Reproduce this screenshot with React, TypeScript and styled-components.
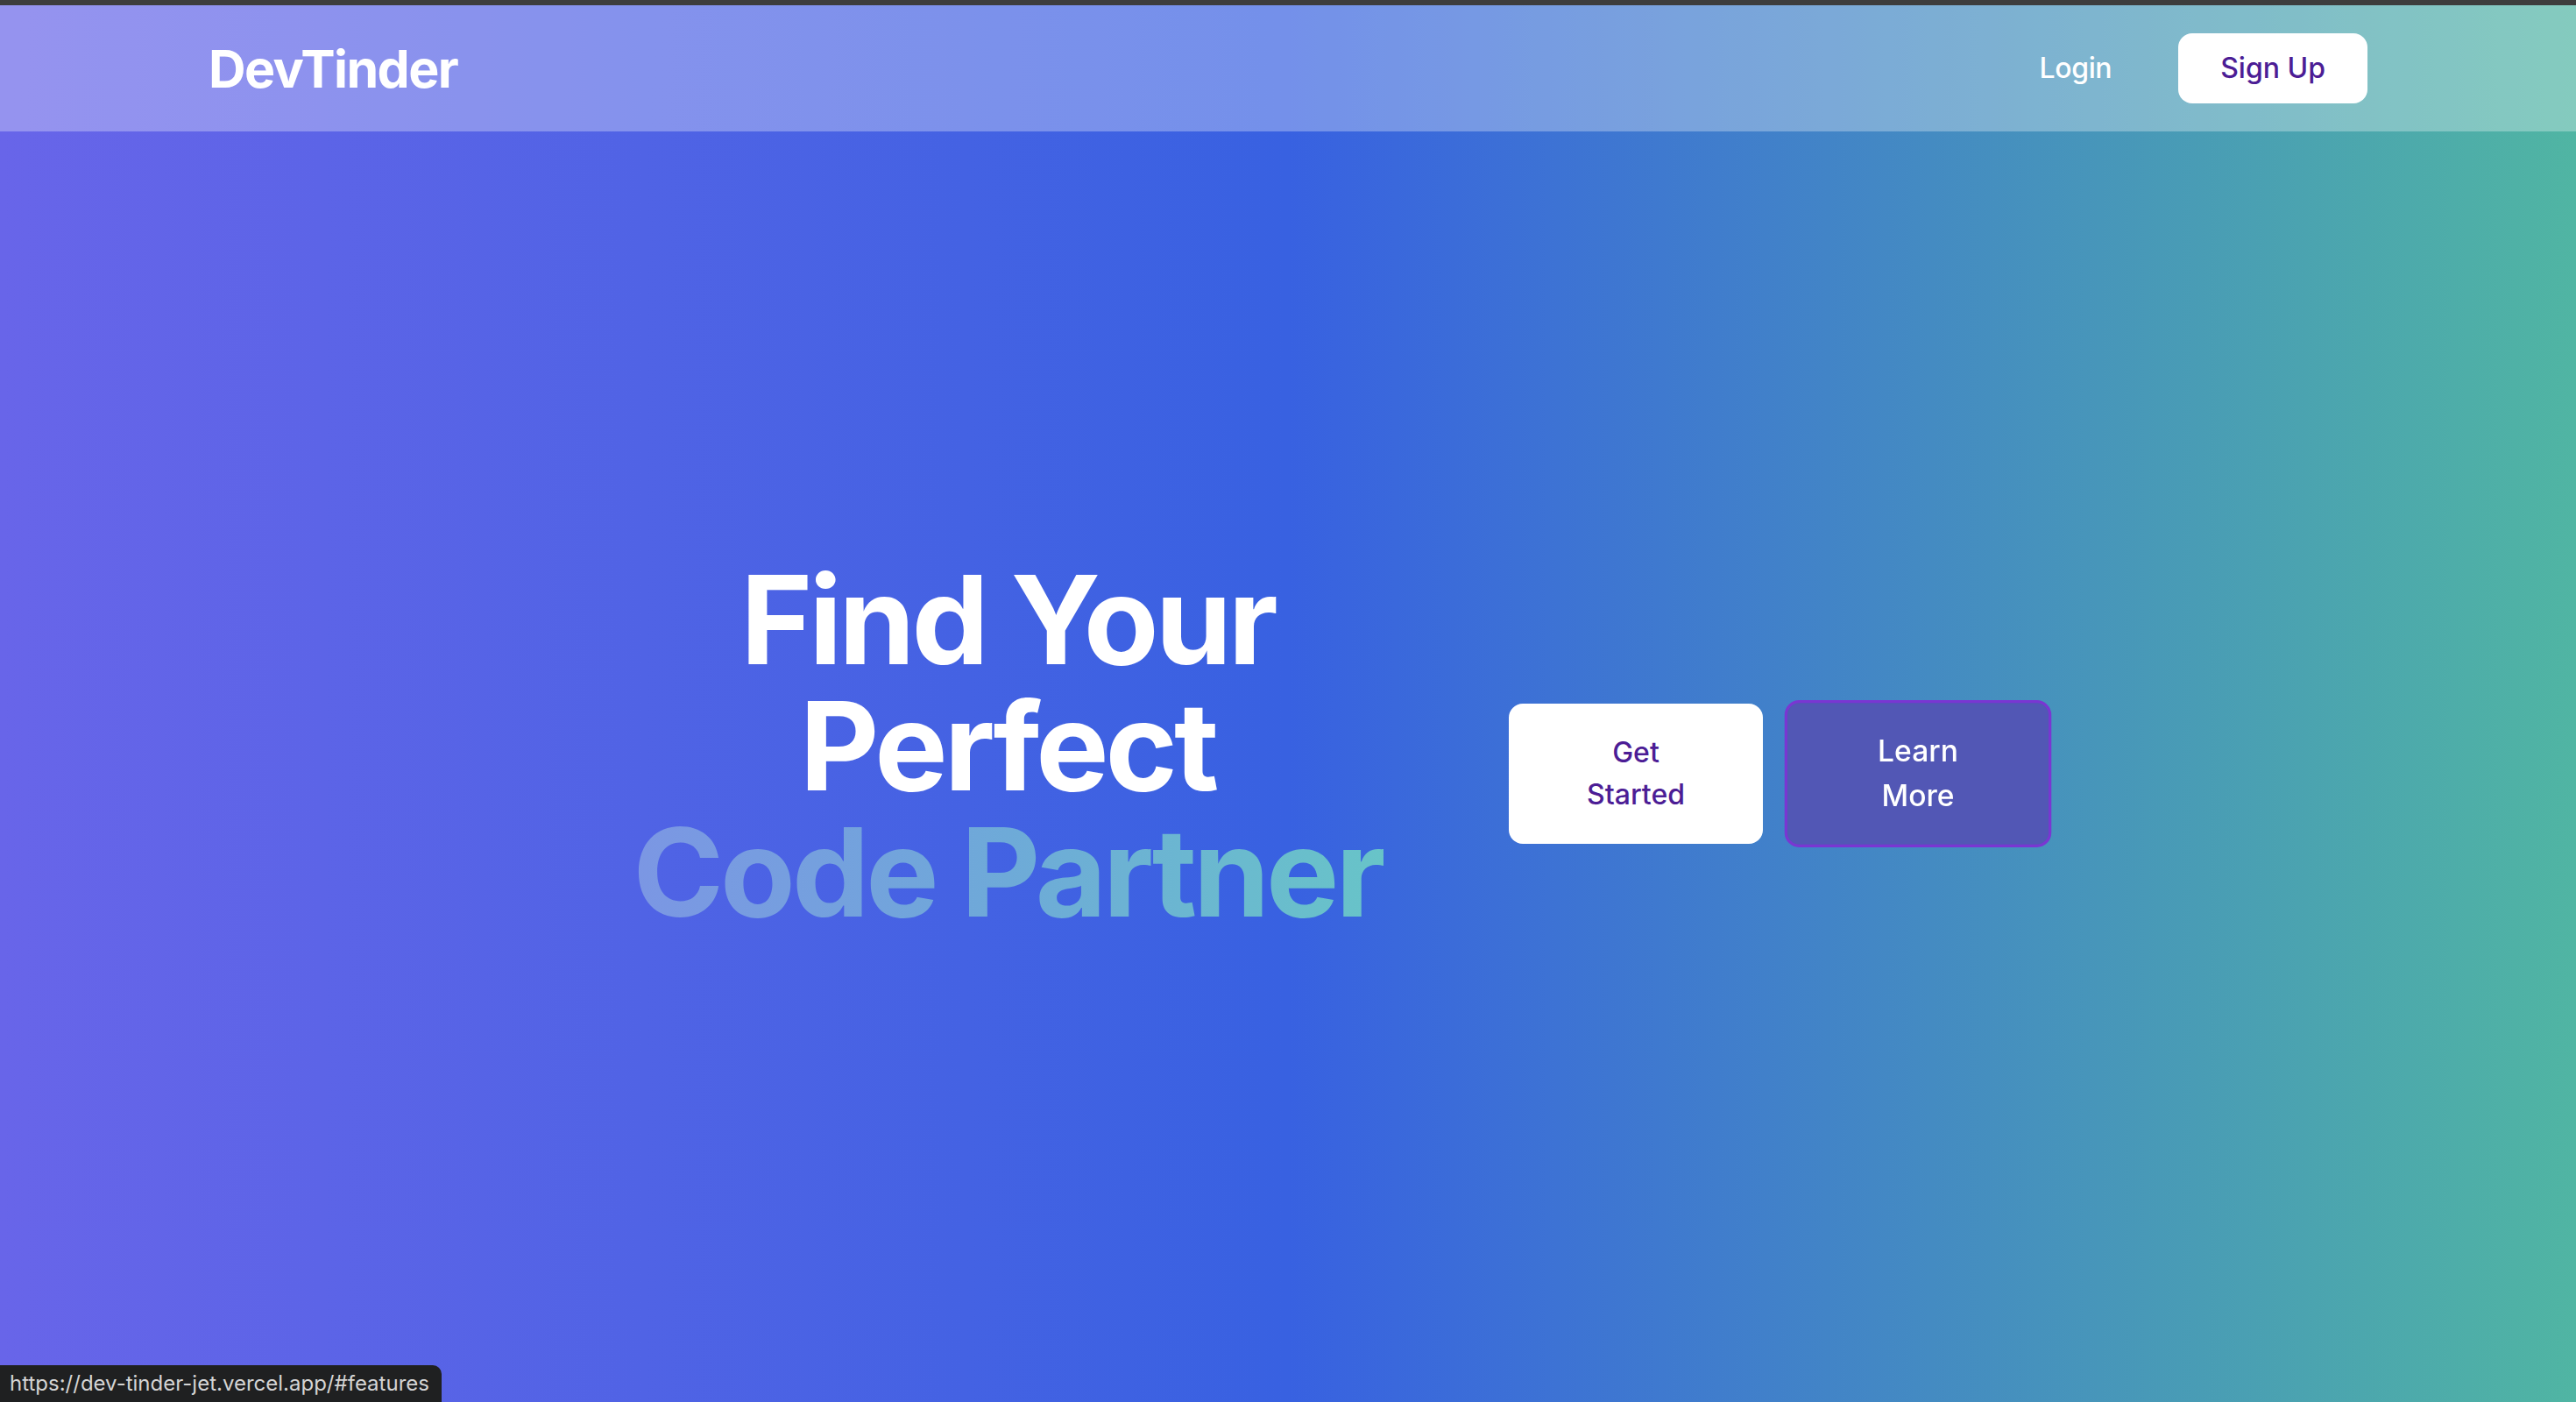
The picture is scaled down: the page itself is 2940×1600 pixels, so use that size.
import React from "react";
import styled, { createGlobalStyle, css } from "styled-components";

const GlobalStyle = createGlobalStyle`
  html, body {
    margin: 0;
    padding: 0;
  }
  body {
    font-family: Inter, "Noto Sans", "Liberation Sans", sans-serif;
    -webkit-font-smoothing: antialiased;
  }
  * { box-sizing: border-box; }
`;

const Page = styled.div`
  min-height: 1600px;
  display: flex;
  flex-direction: column;
  background: linear-gradient(90deg, #6865e9 0%, #3861e1 50%, #50b5a3 100%);
`;

const ChromeBar = styled.div`
  height: 6px;
  background: #3d3d3d;
`;

const Header = styled.header`
  height: 144px;
  background: rgba(255, 255, 255, 0.3);
`;

const HeaderInner = styled.div`
  max-width: 2560px;
  height: 100%;
  margin: 0 auto;
  padding: 0 48px;
  display: flex;
  align-items: center;
  justify-content: space-between;
`;

const Logo = styled.a`
  font-size: 59px;
  font-weight: 700;
  color: #ffffff;
  letter-spacing: -1.6px;
  text-decoration: none;
`;

const Nav = styled.nav`
  display: flex;
  align-items: center;
  gap: 44px;
`;

const NavLink = styled.a`
  padding: 16px 32px;
  font-size: 32px;
  line-height: 48px;
  font-weight: 500;
  letter-spacing: -0.4px;
  color: #ffffff;
  text-decoration: none;
`;

const SignUp = styled.a`
  padding: 16px 48px;
  font-size: 32px;
  line-height: 48px;
  font-weight: 500;
  color: #4c1d95;
  background: #ffffff;
  border-radius: 16px;
  text-decoration: none;
`;

const Hero = styled.main`
  flex: 1;
  display: flex;
  align-items: center;
  justify-content: center;
  padding-top: 16px;
`;

const HeroRow = styled.div`
  display: flex;
  align-items: center;
  gap: 28px;
`;

const Heading = styled.h1`
  width: 1088px;
  margin: 0 0 64px;
  text-align: center;
  font-size: 140px;
  line-height: 144px;
  font-weight: 700;
  letter-spacing: -4px;
  color: #ffffff;
`;

const Accent = styled.span`
  display: block;
  background: linear-gradient(90deg, #7f91e7 0%, #6eaad8 50%, #66cbc4 100%);
  -webkit-background-clip: text;
  background-clip: text;
  color: transparent;
`;

const ButtonRow = styled.div`
  display: flex;
  align-items: center;
  gap: 32px;
`;

const CtaButton = styled.a<{ $variant: "solid" | "ghost" }>`
  width: 290px;
  height: 160px;
  padding: 32px 64px;
  display: flex;
  align-items: center;
  justify-content: center;
  text-align: center;
  font-size: 32px;
  line-height: 48px;
  font-weight: 500;
  border-radius: 16px;
  text-decoration: none;
  ${(p) =>
    p.$variant === "solid"
      ? css`
          background: #ffffff;
          color: #4c1d95;
        `
      : css`
          background: #5257b5;
          color: #ffffff;
          border: 3px solid #7a36d2;
          transform: scale(1.05);
        `}
`;

const StatusBar = styled.div`
  position: fixed;
  left: 0;
  bottom: 0;
  padding: 6px 14px 6px 11px;
  background: #1f2021;
  color: #d4d4d4;
  font-size: 24px;
  line-height: 30px;
  border-top-right-radius: 10px;
`;

export default function App() {
  return (
    <>
      <GlobalStyle />
      <Page>
        <ChromeBar />
        <Header>
          <HeaderInner>
            <Logo href="#">DevTinder</Logo>
            <Nav>
              <NavLink href="#login">Login</NavLink>
              <SignUp href="#signup">Sign Up</SignUp>
            </Nav>
          </HeaderInner>
        </Header>
        <Hero>
          <HeroRow>
            <Heading>
              Find Your Perfect
              <Accent>Code Partner</Accent>
            </Heading>
            <ButtonRow>
              <CtaButton $variant="solid" href="#start">
                Get Started
              </CtaButton>
              <CtaButton $variant="ghost" href="#features">
                Learn More
              </CtaButton>
            </ButtonRow>
          </HeroRow>
        </Hero>
      </Page>
      <StatusBar>https://dev-tinder-jet.vercel.app/#features</StatusBar>
    </>
  );
}
